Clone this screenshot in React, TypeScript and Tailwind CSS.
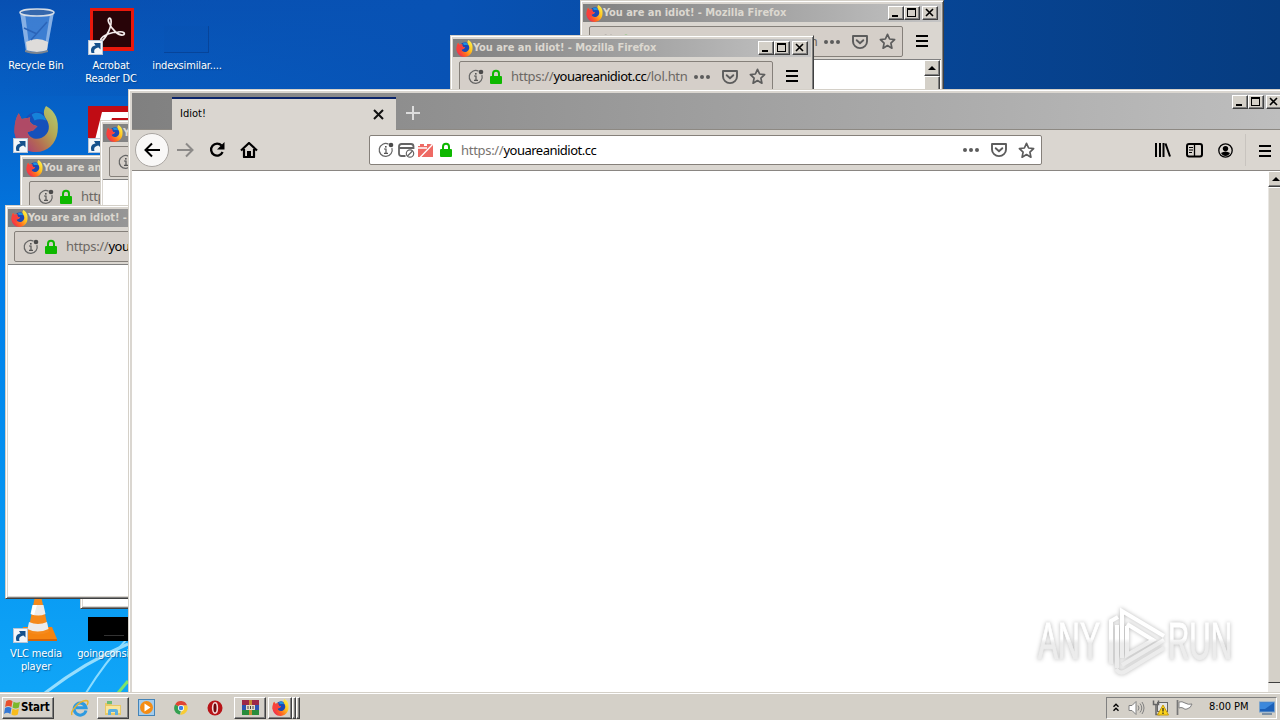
import type { ReactNode } from "react";
import clsx from "clsx";

const RAISED = "border border-t-white border-l-white border-r-[#404040] border-b-[#404040] shadow-[inset_-1px_-1px_0_#808080]";

function FirefoxLogo({ size }: { size: number }) {
  return (
    <svg width={size} height={size} viewBox="0 0 32 32" className="shrink-0">
      <defs>
        <linearGradient id="ffTail" x1="0.95" y1="0.1" x2="0.1" y2="0.8">
          <stop offset="0" stopColor="#fff24a" />
          <stop offset="0.35" stopColor="#ffc420" />
          <stop offset="0.7" stopColor="#ff6a20" />
          <stop offset="1" stopColor="#f0304c" />
        </linearGradient>
      </defs>
      <circle cx="17" cy="14" r="10" fill="#1c48b4" />
      <path d="M13 6c4-3 9 0 10 4-3-1-6-1-8 0z" fill="#1c90e0" />
      <path
        d="M23 0c7 4 9 10 8 18-1 8-7 14-15 14S1 26 1 17c0-5 1-9 3-12l2 4 6-1c-1 2 0 4 2 5l3 1-3 3-4 1c1 4 6 6 10 4 6-3 6-9 3-13-2-3-2-6 0-9z"
        fill="url(#ffTail)"
      />
      <path d="M4 5l2 4 6-1c-1 2 0 4 2 5l3 1-3 3-4 1c1 3 1 3 2 4-4 1-9-1-11-3 0-6 1-11 3-14z" fill="#f8403c" />
    </svg>
  );
}

function ShortcutBadge() {
  return (
    <svg width="15" height="15" viewBox="0 0 15 15" className="absolute -bottom-px left-0">
      <rect x="0.5" y="0.5" width="14" height="14" fill="#f2f6fa" stroke="#b8c4d4" />
      <path d="M3.500 13C2 8.500 4 6 7.500 5.600L6 3l6.500 0v6.500l-2-2C7 8 5.500 10 6.500 13z" fill="#14508c" />
    </svg>
  );
}

function InfoIcon() {
  return (
    <svg width="16" height="16" viewBox="0 0 16 16" fill="none">
      <path d="M10.500 2.100A6.500 6.500 0 1 0 13.900 6" stroke="#666" strokeWidth="1.200" />
      <path d="M6 7h2v4M6 11.300h4" stroke="#555" strokeWidth="1.200" />
      <rect x="7" y="4" width="1.600" height="1.600" fill="#555" />
      <circle cx="13" cy="3" r="2.300" fill="#4a4a4a" />
    </svg>
  );
}

function LockIcon() {
  return (
    <svg width="14" height="16" viewBox="0 0 14 16">
      <path d="M4 8V4.800a3 3 0 0 1 6 0V8" fill="none" stroke="#0eb800" strokeWidth="2" />
      <rect x="1" y="7" width="12" height="8" rx="1" fill="#0eb800" />
    </svg>
  );
}

function DotsIcon() {
  return (
    <svg width="18" height="16" viewBox="0 0 18 16" fill="#5c5c5c">
      <circle cx="3" cy="8" r="2" />
      <circle cx="9" cy="8" r="2" />
      <circle cx="15" cy="8" r="2" />
    </svg>
  );
}

function PocketIcon() {
  return (
    <svg width="18" height="16" viewBox="0 0 18 16" fill="none" stroke="#5c5c5c" strokeWidth="1.900">
      <path d="M2 2h14v5.500a7 6.600 0 0 1-14 0z" strokeLinejoin="round" />
      <path d="M5.700 6.200L9 9.300l3.300-3.100" strokeLinecap="round" />
    </svg>
  );
}

function StarIcon() {
  return (
    <svg width="17" height="17" viewBox="0 0 17 17" fill="none" stroke="#5c5c5c" strokeWidth="1.700" strokeLinejoin="round">
      <path d="M8.500 1.300l2.100 4.700 5 .6-3.700 3.500 1 5.100-4.400-2.600-4.400 2.600 1-5.100L1.400 6.600l5-.6z" />
    </svg>
  );
}

function MenuIcon() {
  return (
    <svg width="12" height="13" viewBox="0 0 12 13" fill="#000">
      <path d="M0 1h12v2H0zM0 6h12v2H0zM0 11h12v2H0z" />
    </svg>
  );
}

function CaptionButtons() {
  return (
    <div className="flex shrink-0">
      <div className={clsx(RAISED, "h-[14px] w-4 bg-[#d4d0c8]")}>
        <svg width="14" height="12" viewBox="0 0 14 12">
          <path d="M3 8h6v2H3z" />
        </svg>
      </div>
      <div className={clsx(RAISED, "h-[14px] w-4 bg-[#d4d0c8]")}>
        <svg width="14" height="12" viewBox="0 0 14 12">
          <path d="M2 1h9v9H2zM3 3v6h7V3z" fillRule="evenodd" />
        </svg>
      </div>
      <div className={clsx(RAISED, "ml-0.5 h-[14px] w-4 bg-[#d4d0c8]")}>
        <svg width="14" height="12" viewBox="0 0 14 12" stroke="#000" strokeWidth="1.600">
          <path d="M3 2l7 7M10 2L3 9" />
        </svg>
      </div>
    </div>
  );
}

function ScrollArrow() {
  return (
    <div className={clsx(RAISED, "flex h-4 w-4 shrink-0 items-center justify-center bg-[#d4d0c8]")}>
      <svg width="8" height="4" viewBox="0 0 8 4">
        <path d="M0 4h8L4 0z" />
      </svg>
    </div>
  );
}

// small "You are an idiot!" window, all of them are the same size
function PopupWindow({ place }: { place: string }) {
  return (
    <div
      className={clsx(
        "absolute flex h-[394px] w-[364px] flex-col border border-t-[#d4d0c8] border-l-[#d4d0c8] border-r-[#404040] border-b-[#404040] bg-[#dad6d0] p-[2px] shadow-[inset_1px_1px_0_#fff,inset_-1px_-1px_0_#808080]",
        place,
      )}
    >
      <div className="mt-px flex h-[18px] shrink-0 items-center bg-linear-to-r from-[#808080] to-[#c4c4c4] pr-[3px] pl-[3px]">
        <FirefoxLogo size={17} />
        <div className="flex-1 font-['DejaVu_Sans_Condensed','DejaVu_Sans',sans-serif] text-[11px] font-bold tracking-[-0.05px] whitespace-nowrap text-[#dcd8d0]">
          You are an idiot! - Mozilla Firefox
        </div>
        <CaptionButtons />
      </div>
      <div className="flex h-[38px] shrink-0 items-start border-b border-[#808080] pt-1 pl-1.5">
        <div className="flex h-[31px] w-[314px] shrink-0 items-center rounded-[2px] border border-[#85807a] bg-[#d5cfc9] pl-2">
          <InfoIcon />
          <div className="ml-[5px]">
            <LockIcon />
          </div>
          <div className="ml-2 w-[177px] overflow-hidden font-['Noto_Sans',sans-serif] text-[13px] tracking-[-0.3px] whitespace-nowrap text-[#6c6864]">
            https://<span className="tracking-[-0.5px] text-black">youareanidiot.cc</span>/lol.htn
          </div>
          <div className="ml-[5px] flex items-center gap-2.5">
            <DotsIcon />
            <PocketIcon />
            <StarIcon />
          </div>
        </div>
        <div className="mt-2 ml-[13px]">
          <MenuIcon />
        </div>
      </div>
      <div className="flex flex-1 justify-end bg-white">
        <div className="mr-px flex w-4 flex-col bg-[#ebe9e5]">
          <ScrollArrow />
          <div className={clsx(RAISED, "h-40 bg-[#d4d0c8]")} />
        </div>
      </div>
    </div>
  );
}

function DesktopIcon({ place, label, children }: { place: string; label: ReactNode; children: ReactNode }) {
  return (
    <div className={clsx("absolute flex w-[76px] flex-col items-center", place)}>
      <div className="relative h-[46px] w-[46px]">{children}</div>
      <div className="mt-[5px] text-center font-['DejaVu_Sans_Condensed','DejaVu_Sans',sans-serif] text-[11px] leading-[13px] tracking-[-0.15px] whitespace-nowrap text-white [text-shadow:1px_1px_1px_#00306088]">
        {label}
      </div>
    </div>
  );
}

function RecycleBin() {
  return (
    <svg width="46" height="46" viewBox="0 0 46 46" className="translate-x-0.5">
      <path d="M5 4l6 39q12 5 21 0l7-39z" fill="#4a88d8" fillOpacity="0.8" />
      <path d="M5 4l6 39q2 2 4 2L10 5zM35 6l-6 38q2 0 3-2l7-38z" fill="#b8d2f2" fillOpacity="0.6" />
      <path d="M11 34q11-6 22 0l-1 8q-10 4-20 0z" fill="#dedcda" />
      <path d="M9 20l13 6M16 32l16-18" stroke="#2b64b8" strokeWidth="1.500" />
      <ellipse cx="22" cy="4.500" rx="17" ry="3.500" fill="#3567ac" stroke="#d6dde6" strokeWidth="1.500" />
      <path d="M10 42q12 4 23 0v2q-12 4-23 0z" fill="#7c848e" />
    </svg>
  );
}

function AcrobatIcon() {
  return (
    <svg width="46" height="46" viewBox="0 0 46 46">
      <rect x="2" y="0" width="44" height="43" fill="#e8180c" />
      <rect x="5" y="3" width="38" height="36" fill="#280408" />
      <path
        d="M13 34c6-5 11-16 10-22-1-4-4-1-2 3 3 7 10 13 14 12 3-1 1-4-5-3-6 0-15 3-17 7-1 2 0 3 0 3z"
        fill="none"
        stroke="#f4ecec"
        strokeWidth="1.700"
      />
    </svg>
  );
}

function VlcCone() {
  return (
    <svg width="46" height="46" viewBox="0 0 46 46" className="translate-x-0.5">
      <path d="M8 31h29l5 12H6z" fill="#f58410" />
      <path d="M6 43h36v2H6z" fill="#d46408" />
      <path d="M20 0h6l8 36q-11 5-21 0z" fill="#f58a1c" />
      <path d="M17.500 9h11l2 9q-7 3-15 0zM14 26q9 4 18 0l1.500 7q-11 5-21 0z" fill="#ececec" />
      <path d="M18 9h4l-3 10-3-1z" fill="#fff" />
    </svg>
  );
}

function UrlExtras() {
  return (
    <>
      <svg width="17" height="16" viewBox="0 0 17 16" fill="none" stroke="#646464" strokeWidth="1.800">
        <path d="M7.500 14H3.500Q1 14 1 11.500V4.500Q1 2 3.500 2h9.500q2.500 0 2.500 2.500V7M1 6h14" />
        <circle cx="12" cy="11.500" r="3.700" strokeWidth="1.200" />
        <path d="M9.500 14l5-5" strokeWidth="1.200" />
      </svg>
      <svg width="15" height="15" viewBox="0 0 15 15" className="ml-[3px]">
        <path d="M0 3h2V1h4v2h3V1h3l3 1v12H0z" fill="#ee6a64" />
        <path d="M0 5h9M2 14.500L14.500 1.500" stroke="#fff" strokeWidth="1.300" />
      </svg>
    </>
  );
}

function MainWindow() {
  return (
    <div className="absolute top-[89px] left-[128px] flex h-[603px] w-[1152px] flex-col overflow-hidden border-t border-l border-[#d4d0c8] bg-[#dad6d0]">
      <div className="flex flex-1 flex-col border-t border-l border-white pt-0.5 pl-[2px]">
        <div className="flex h-[37px] shrink-0 border-b border-[#8d8983] bg-linear-to-r from-[#808080] to-[#bebebe]">
          <div className="mt-1 ml-10 flex h-[34px] w-56 shrink-0 items-center border-t-2 border-[#0a246a] bg-[#dad6d0] pr-3 pb-0.5 pl-2">
            <span className="flex-1 font-['DejaVu_Sans_Condensed','DejaVu_Sans',sans-serif] text-[11px]">Idiot!</span>
            <svg width="11" height="11" viewBox="0 0 11 11" stroke="#111" strokeWidth="2">
              <path d="M1 1l9 9M10 1l-9 9" />
            </svg>
          </div>
          <svg width="14" height="14" viewBox="0 0 14 14" stroke="#dcdcdc" strokeWidth="2" className="mt-[13px] ml-2.5">
            <path d="M7 0v14M0 7h14" />
          </svg>
          <div className="mt-0.5 ml-auto w-12 shrink-0">
            <CaptionButtons />
          </div>
        </div>

        <div className="flex h-[41px] shrink-0 items-center border-b border-[#8a8682]">
          <div className="ml-[3px] flex h-[34px] w-[34px] items-center justify-center rounded-full border border-[#aaa6a2] bg-[#f9f8f7]">
            <svg width="17" height="16" viewBox="0 0 17 16" fill="none" stroke="#000" strokeWidth="2">
              <path d="M16 8H2M8 1.500L1.500 8 8 14.500" />
            </svg>
          </div>
          <svg width="17" height="16" viewBox="0 0 17 16" fill="none" stroke="#8c8a88" strokeWidth="2" className="ml-2">
            <path d="M0 8h15M9 1.500L15.500 8 9 14.500" />
          </svg>
          <svg width="16" height="16" viewBox="0 0 16 16" className="ml-[15px]">
            <path d="M12.600 3.600A6 6 0 1 0 13.600 10" fill="none" stroke="#000" strokeWidth="2.300" />
            <path d="M15.500 0v7.500H8z" />
          </svg>
          <svg width="18" height="16" viewBox="0 0 18 16" className="ml-[15px]">
            <path d="M1 8.500L9 1l8 7.500M4 7v8h10V7" fill="none" stroke="#000" strokeWidth="2.200" strokeLinejoin="round" />
            <path d="M7 9h4v6H7z" />
          </svg>
          <div className="ml-[111px] flex h-[30px] w-[673px] shrink-0 items-center rounded-[2px] border border-[#85807a] bg-white pl-2">
            <InfoIcon />
            <div className="ml-1 flex items-center">
              <UrlExtras />
            </div>
            <div className="ml-1.5">
              <LockIcon />
            </div>
            <div className="ml-2 flex-1 pt-px font-['Noto_Sans',sans-serif] text-[13px] tracking-[-0.3px] whitespace-nowrap text-[#77736f]">
              https://<span className="tracking-[-0.5px] text-black">youareanidiot.cc</span>
            </div>
            <div className="flex items-center gap-2.5 pr-1.5">
              <DotsIcon />
              <PocketIcon />
              <StarIcon />
            </div>
          </div>
          <svg width="16" height="14" viewBox="0 0 16 14" stroke="#000" strokeWidth="2" className="ml-[113px]">
            <path d="M1 0v14M5 0v14M8.500 0v14M10.500 0.500l4.500 13" />
          </svg>
          <svg width="17" height="15" viewBox="0 0 17 15" fill="none" stroke="#000" className="ml-[15px]">
            <rect x="1" y="1" width="15" height="12.500" rx="2" strokeWidth="2" />
            <path d="M8.500 1v13" strokeWidth="1.300" />
            <path d="M3 4.500h4M3 7h4M3 9.500h3" strokeWidth="1" />
          </svg>
          <svg width="15" height="15" viewBox="0 0 15 15" className="ml-[15px]">
            <circle cx="7.500" cy="7.500" r="6.700" fill="none" stroke="#000" strokeWidth="1.300" />
            <circle cx="7.500" cy="5.600" r="2.700" />
            <path d="M3 10q4.500-3 9 0-1.500 3-4.500 3T3 10z" />
          </svg>
          <div className="ml-3 h-8 w-px bg-[#c8c4bf]" />
          <div className="ml-[13px]">
            <MenuIcon />
          </div>
        </div>

        <div className="flex flex-1 justify-end bg-white">
          <div className="flex w-3 flex-col overflow-hidden">
            <ScrollArrow />
            <div className="w-4 flex-1 border-t border-l border-b border-t-white border-l-[#e8e6e2] border-b-[#404040] bg-[#d4d0c8]" />
            <div className="h-[9px] w-4 bg-[#ebe9e5]" />
          </div>
        </div>
      </div>
    </div>
  );
}

function Watermark() {
  return (
    <svg
      width="210"
      height="76"
      viewBox="0 0 210 76"
      className="absolute top-[602px] left-[1030px] drop-shadow-[0_0_2px_#00000048]"
    >
      <defs>
        <linearGradient id="markFade" x1="0" y1="0" x2="0" y2="76" gradientUnits="userSpaceOnUse">
          <stop offset="0.48" stopColor="#fff" />
          <stop offset="0.54" stopColor="#ececec" />
        </linearGradient>
      </defs>
      <g
        fill="url(#markFade)"
        stroke="url(#markFade)"
        strokeWidth="1"
        fontFamily="'Liberation Sans Narrow','Liberation Sans',sans-serif"
        fontSize="51"
      >
        <text x="8" y="57" textLength="62" lengthAdjust="spacingAndGlyphs">
          ANY
        </text>
        <text x="138" y="57" textLength="64" lengthAdjust="spacingAndGlyphs">
          RUN
        </text>
      </g>
      <g fill="none" stroke="url(#markFade)" strokeWidth="4">
        <path d="M81 62V19l7-4M92 56V9l42 25M87 66V23" />
        <path d="M97 24v29l26-15-26-16" />
        <path d="M134 38L92 63M86 67q4 6 10 2l38-23" />
      </g>
    </svg>
  );
}

function TaskButton({ className, children }: { className: string; children: ReactNode }) {
  return <div className={clsx(RAISED, "flex h-[22px] items-center justify-center bg-[#d4d0c8]", className)}>{children}</div>;
}

function Taskbar() {
  return (
    <div className="absolute bottom-0 left-0 flex h-7 w-full items-center border-t border-[#d4d0c8] bg-[#d4d0c8] pt-0.5 pr-[3px] pl-0.5 shadow-[inset_0_1px_0_#fff]">
      <div className={clsx(RAISED, "flex h-[22px] w-[52px] items-center bg-[#d4d0c8] pl-px")}>
        <svg width="17" height="17" viewBox="0 0 16 16" className="shrink-0">
          <path d="M2 2q3-2 6 0L7 7.500q-3-2-6 0z" fill="#e8502c" />
          <path d="M9 2.500q3 2 6 0L14 8q-3 2-6 0z" fill="#7cb82c" />
          <path d="M1 8.500q3-2 6 0L6 14q-3-2-6 0z" fill="#3478d4" />
          <path d="M8 9q3 2 6 0l-1 5.500q-3 2-6 0z" fill="#f8bc1c" />
        </svg>
        <span className="font-['DejaVu_Sans_Condensed','DejaVu_Sans',sans-serif] text-[11.500px] font-bold tracking-[-0.2px]">Start</span>
      </div>
      <svg width="18" height="18" viewBox="0 0 18 18" className="ml-[17px]">
        <path d="M15 11.500A6 6 0 1 1 15 8.700H5" fill="none" stroke="#2e9ae0" strokeWidth="3" />
        <path d="M1 16C-1 12 8 2 15 1.500c3 0 2 3 1 4.500" fill="none" stroke="#e8b42c" strokeWidth="1.400" />
      </svg>
      <TaskButton className="ml-2 w-8">
        <svg width="18" height="16" viewBox="0 0 18 16">
          <path d="M1 3h6l1 2h9v10H1z" fill="#e8c864" />
          <path d="M3 1h5v3H3z" fill="#6cbc74" />
          <path d="M2 6h14v7H2z" fill="#fae69c" />
          <path d="M4 15v-4q0-2 2-2h6q2 0 2 2v4h-3v-3H7v3z" fill="#5cb0e0" />
        </svg>
      </TaskButton>
      <svg width="17" height="17" viewBox="0 0 17 17" className="ml-[9px]">
        <rect x="0.500" y="0.500" width="16" height="16" fill="#a4ccec" stroke="#4484b8" />
        <circle cx="8.500" cy="8.500" r="6.500" fill="#f48c14" />
        <path d="M6.500 4.500v8l6-4z" fill="#fff" />
      </svg>
      <svg width="14" height="14" viewBox="0 0 16 16" className="ml-[19px]">
        <path d="M8 8L1.300 4A7.500 7.500 0 0 1 15 5.200H8z" fill="#e04434" />
        <path d="M8 8l-1 7.500A7.500 7.500 0 0 1 1.300 4z" fill="#34a050" />
        <path d="M8 8V5.200h7A7.500 7.500 0 0 1 7 15.500L10.500 9z" fill="#f8cc34" />
        <circle cx="8" cy="8" r="3.500" fill="#fff" />
        <circle cx="8" cy="8" r="2.600" fill="#3c80e8" />
      </svg>
      <svg width="16" height="16" viewBox="0 0 17 17" className="ml-[19px]">
        <circle cx="8.500" cy="8.500" r="8" fill="#b81418" />
        <ellipse cx="8.500" cy="8.500" rx="2.500" ry="5.500" fill="#70080c" stroke="#f4d8d8" strokeWidth="1.700" />
      </svg>
      <TaskButton className="ml-[11px] w-8">
        <svg width="17" height="16" viewBox="0 0 17 16">
          <path d="M0 0h17v5H0z" fill="#9c2848" />
          <path d="M0 5h17v5H0z" fill="#2c54b4" />
          <path d="M0 10h17v5H0z" fill="#288c3c" />
          <path d="M7 0h3v15H7z" fill="#c88c34" />
          <path d="M4 5h9v5H4z" fill="#e4dccc" />
          <path d="M6 6v3M8.500 6v3M11 6v3" stroke="#444" />
        </svg>
      </TaskButton>
      <div className="ml-0.5 flex">
        <TaskButton className="w-6">
          <FirefoxLogo size={17} />
        </TaskButton>
        <div className={clsx(RAISED, "h-[22px] w-1")} />
        <div className={clsx(RAISED, "h-[22px] w-1")} />
      </div>

      <div className="ml-auto flex h-[22px] w-[171px] items-center border border-t-[#808080] border-r-white border-b-white border-l-[#808080] pl-1.5">
        <svg width="6" height="9" viewBox="0 0 6 9" fill="none" stroke="#000" strokeWidth="1.400">
          <path d="M0.500 3.800L3 1.300l2.500 2.500M0.500 7.800L3 5.300l2.500 2.500" />
        </svg>
        <svg width="17" height="16" viewBox="0 0 17 16" fill="none" stroke="#808080" className="ml-[9px]">
          <path d="M1 5.500h3l4-4v13l-4-4H1z" fill="#fff" />
          <path d="M10 5.500q2 2.500 0 5M12 3.500q3.500 4.500 0 9M14 2q4 6 0 12" />
        </svg>
        <svg width="17" height="17" viewBox="0 0 17 17" className="ml-[7px]">
          <rect x="5.500" y="3.500" width="10" height="9" fill="#e4e4e4" stroke="#666" />
          <path d="M1.500 1.500v4h5v-4M4 5.500v10h4" fill="none" stroke="#666" strokeWidth="1.500" />
          <path d="M11 6l5.500 10h-11z" fill="#fcd41c" stroke="#c89c08" />
          <path d="M11 9v3.500M11 13.500V15" stroke="#222" strokeWidth="1.200" />
        </svg>
        <svg width="17" height="15" viewBox="0 0 17 15" className="ml-[7px]">
          <path d="M1.500 0v15" stroke="#777" strokeWidth="1.700" />
          <path d="M3 2q3-1 6 1 3 2 7 1-1 4-5 5-2 1-4-1-2-1-4 0z" fill="#fff" stroke="#808080" />
        </svg>
        <span className="ml-4 font-['DejaVu_Sans_Condensed','DejaVu_Sans',sans-serif] text-[11px] tracking-[-0.05px] whitespace-nowrap">
          8:00 PM
        </span>
        <svg width="16" height="14" viewBox="0 0 16 14" className="mr-px ml-auto">
          <rect x="0.500" y="1" width="15" height="10" fill="#1c60b8" stroke="#7ca4cc" />
          <path d="M1 1.500h14L6 8H1z" fill="#3c88dc" />
          <path d="M3 12h10v2H3z" fill="#7c90a4" />
        </svg>
      </div>
    </div>
  );
}

export default function App() {
  return (
    <div className="relative h-[720px] w-[1280px] overflow-hidden bg-linear-to-b from-[#0850b2] via-[#007eea] via-38% to-[#12a8f8] text-black">
      <div className="absolute inset-x-0 top-0 h-24 bg-linear-to-r from-[#0450b4]/0 via-[#0852b4] via-35% to-[#063c80]" />
      <svg width="128" height="100" viewBox="0 0 128 100" className="absolute top-[592px] left-0" fill="none">
        <path d="M45 101Q85 70 128 52" stroke="#b8ecff" strokeWidth="3" opacity="0.8" />
        <path d="M86 101Q105 70 128 46" stroke="#8cdcff" strokeWidth="2" />
        <path d="M118 101l10-12" stroke="#7ce46c" strokeWidth="3" />
      </svg>

      <DesktopIcon place="top-2 left-[-2px]" label="Recycle Bin">
        <RecycleBin />
      </DesktopIcon>
      <DesktopIcon place="top-2 left-[73px]" label={<>Acrobat<br />Reader DC</>}>
        <AcrobatIcon />
        <ShortcutBadge />
      </DesktopIcon>
      <DesktopIcon place="top-2 left-[149px]" label="indexsimilar....">
        <div className="mt-[18px] h-[27px] w-[45px] border-r border-b border-[#06449a] bg-[#0850b0]/20" />
      </DesktopIcon>
      <DesktopIcon place="top-[106px] left-[-2px]" label="">
        <div className="opacity-70">
          <FirefoxLogo size={46} />
        </div>
        <ShortcutBadge />
      </DesktopIcon>
      <DesktopIcon place="top-[106px] left-[73px]" label="">
        <svg width="46" height="46" viewBox="0 0 46 46">
          <rect width="46" height="46" fill="#c00c14" />
          <path d="M14 6h28v6H24l-2 7h12v6H20l-5 17H5z" fill="#fff" />
        </svg>
        <ShortcutBadge />
      </DesktopIcon>
      <DesktopIcon place="top-[596px] left-[-2px]" label={<>VLC media<br />player</>}>
        <VlcCone />
        <ShortcutBadge />
      </DesktopIcon>
      <DesktopIcon place="top-[596px] left-[74px]" label="goingconsist...">
        <div className="mt-[21px] -ml-px h-6 w-[46px] bg-black pt-[18px] pl-4">
          <div className="h-px w-5 bg-[#333]" />
        </div>
      </DesktopIcon>

      <PopupWindow place="left-[580px] top-0" />
      <PopupWindow place="left-[450px] top-[35px]" />
      <PopupWindow place="left-[20px] top-[155px]" />
      <PopupWindow place="left-[100px] top-[120px]" />
      <PopupWindow place="left-[80px] top-[215px]" />
      <PopupWindow place="left-[5px] top-[205px]" />
      <MainWindow />
      <Watermark />
      <Taskbar />
    </div>
  );
}
